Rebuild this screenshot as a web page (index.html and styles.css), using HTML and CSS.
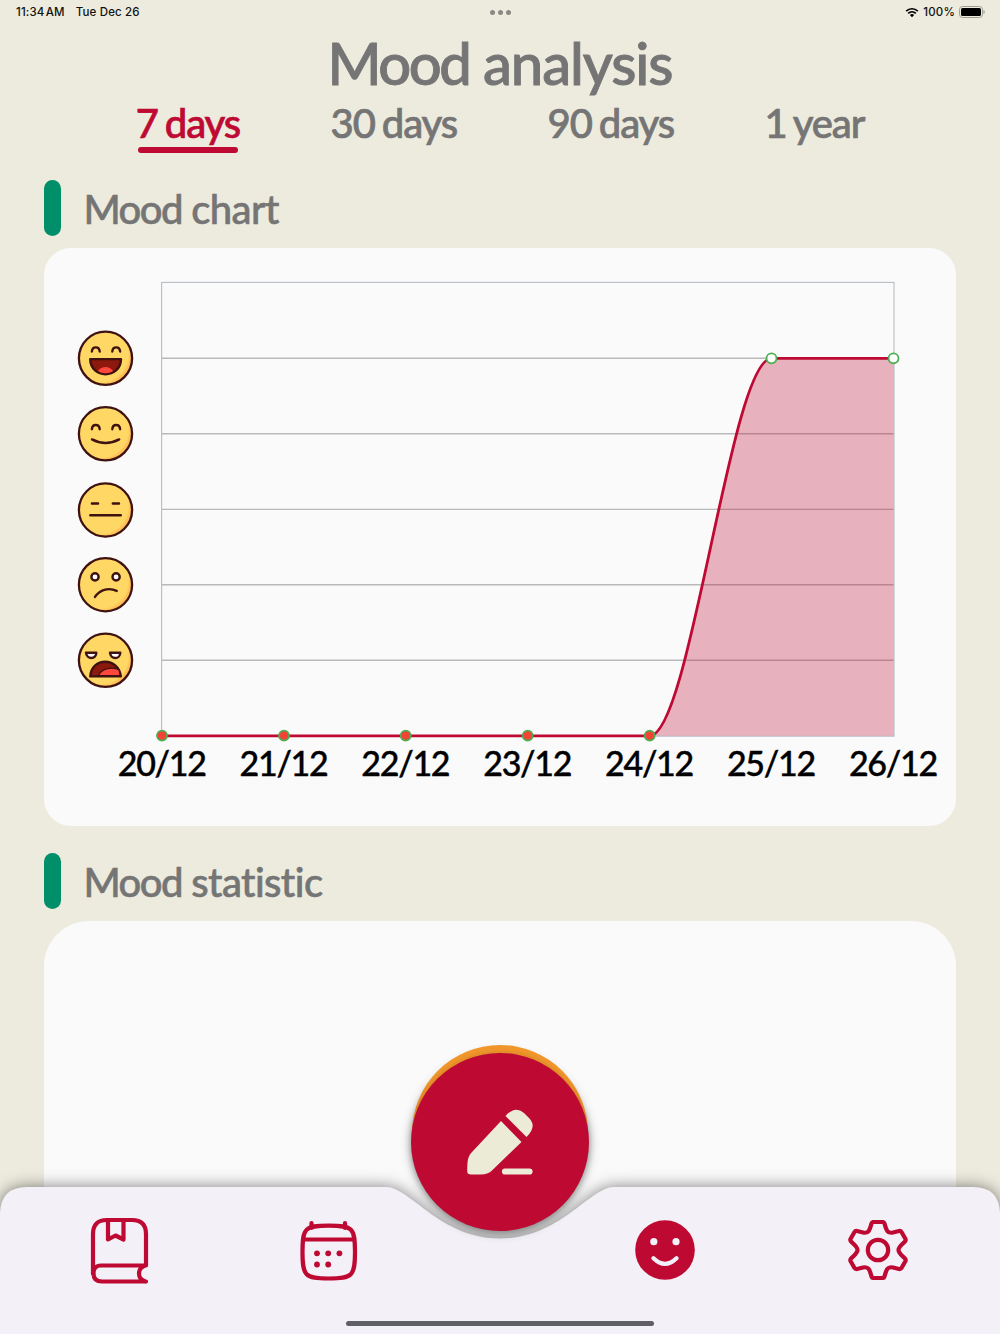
FILE: index.html
```html
<!DOCTYPE html>
<html lang="en">
<head>
<meta charset="UTF-8">
<meta name="viewport" content="width=device-width">
<title>Mood analysis</title>
<link rel="stylesheet" href="styles.css">
</head>
<body>
<div class="app">
	<div class="status">
		<div class="status-side"><span class="clock">11:34 AM</span><span>Tue Dec 26</span></div>
		<div class="dots"><i></i><i></i><i></i></div>
		<div class="status-side right">
			<svg class="wifi" viewBox="0 0 14 11" width="14" height="11">
				<path d="M1.2 4.1a8.3 8.3 0 0 1 11.6 0M3.2 6.3a5.5 5.5 0 0 1 7.6 0" fill="none" stroke="#000" stroke-width="1.7"/>
				<path d="M4.9 8a3 3 0 0 1 4.2 0L7 10.3z"/>
			</svg>
			<span>100%</span>
			<svg class="battery" viewBox="0 0 26 12" width="26" height="12">
				<rect x=".5" y=".5" width="23" height="11" rx="3" fill="none" stroke="#a09f96"/>
				<rect x="2" y="2" width="20" height="8" rx="1.6"/>
				<path d="M24.5 4v4q1.3-.6 1.3-2t-1.3-2" fill="#a09f96"/>
			</svg>
		</div>
	</div>

	<h1><span class="tight">Mood</span> analysis</h1>
	<div class="tabs">
		<a class="tab active">7 days</a>
		<a class="tab">30 days</a>
		<a class="tab">90 days</a>
		<a class="tab year">1 year</a>
	</div>

	<h2><div><span class="tight">Mood</span> chart</div></h2>
	<div class="card">
		<svg class="chart" viewBox="44 248 912 578">
			<defs>
				<radialGradient id="skin" cx=".4" cy=".42" r=".6">
					<stop offset=".88" stop-color="#ffd764"/>
					<stop offset=".96" stop-color="#ffbd55"/>
				</radialGradient>
				<g id="face">
					<circle r="26.6" fill="url(#skin)" stroke="#3f1212" stroke-width="2.3"/>
				</g>
			</defs>

			<!-- grid -->
			<g stroke="#b9b9ba" stroke-width="1.4">
				<path d="M162 358.3H894M162 433.8H894M162 509.4H894M162 584.8H894M162 660.3H894"/>
			</g>
			<rect x="161.6" y="282.4" width="732.4" height="453.8" fill="none" stroke="#b7bdc4" stroke-width="1.1"/>

			<!-- mood line -->
			<path class="area" d="M649.7 735.8C690.3 735.8 730.9 358.3 771.5 358.3H893.5V735.8z"/>
			<path class="line" d="M162 735.8H649.7C690.3 735.8 730.9 358.3 771.5 358.3H893.5"/>
			<g class="low">
				<circle cx="162" cy="735.6" r="5"/><circle cx="284" cy="735.6" r="5"/><circle cx="405.7" cy="735.6" r="5"/>
				<circle cx="527.7" cy="735.6" r="5"/><circle cx="649.7" cy="735.6" r="5"/>
			</g>
			<g class="high">
				<circle cx="771.5" cy="358.3" r="5"/><circle cx="893.5" cy="358.3" r="5"/>
			</g>

			<g class="dates">
				<text x="161.7" y="776.4">20/12</text>
				<text x="283.5" y="776.4">21/12</text>
				<text x="405.3" y="776.4">22/12</text>
				<text x="527.2" y="776.4">23/12</text>
				<text x="649" y="776.4">24/12</text>
				<text x="770.9" y="776.4">25/12</text>
				<text x="892.9" y="776.4">26/12</text>
			</g>

			<!-- faces -->
			<g class="mood" transform="translate(105.5 358.3)">
				<use href="#face"/>
				<path d="M-13.6-6.8c.4-5.5 7.4-5.5 7.8 0M6.8-6.8c.4-5.5 7.4-5.5 7.8 0"/>
				<path d="M-15.3.8H15.5C15 21-15 21-15.3.8z" fill="#8d180e"/>
				<path d="M-7.5 12.6C-4 7.4 4 7.4 7.5 12.6 3 15.6-3 15.6-7.5 12.6z" fill="#ff473e" stroke="none"/>
			</g>
			<g class="mood" transform="translate(105.5 433.8)">
				<use href="#face"/>
				<path d="M-13.6-4.6c.4-5.5 7.4-5.5 7.8 0M6.8-4.6c.4-5.5 7.4-5.5 7.8 0M-13.5 5.6Q0 12.8 13.7 5.6"/>
			</g>
			<g class="mood" transform="translate(105.5 510)">
				<use href="#face"/>
				<path d="M-13.6-6.5h6.2M7.3-6.5h6.2M-15.2 5.2H15.3"/>
			</g>
			<g class="mood" transform="translate(105.5 584.7)">
				<use href="#face"/>
				<circle cx="-10.5" cy="-7.8" r="3.6" fill="#fff"/><circle cx="10.6" cy="-7.8" r="3.6" fill="#fff"/>
				<path d="M-10.5 12.2C-5 4 4 2.8 11.2 6.2"/>
			</g>
			<g class="mood" transform="translate(105.5 660.3)">
				<use href="#face"/>
				<path d="M-19.5-7.6H-9.2C-9-.5-19-.5-19.5-7.6zM4.5-7.6H14.8C14.5-.5 5-.5 4.5-7.6z" fill="#fff"/>
				<path d="M-15.2 16.1C-14-3.5 13-3.5 15.3 16.1z" fill="#8d180e"/>
				<path d="M-7 15.2C-4 8 7 6 13.5 9.5L14.6 15.2z" fill="#ff473e" stroke-width="1.2"/>
			</g>
		</svg>
	</div>

	<h2 class="second"><div><span class="tight">Mood</span> statistic</div></h2>
	<div class="card stat"></div>

	<div class="nav">
		<svg class="nav-bg" viewBox="0 0 1000 147">
			<path d="M0 147V26Q1 0 27 0H386C410 0 440 51.500 500 51.500S590 0 614 0H973Q999 0 1000 26V147z"/>
		</svg>
		<div class="nav-items">
			<svg class="icon book" viewBox="0 0 60 68">
				<path d="M3 57V17Q3 3 17 3H42Q56 3 56 17V48.500H11Q3.500 48.500 3.500 56.500T12 64.500H56M55.500 48.500Q49 50.500 49 56.500T55.500 64.500"/>
				<path d="M18 4V22.500L25.500 18.500 33.500 22.500V4"/>
			</svg>
			<svg class="icon cal" viewBox="0 0 60 62">
				<path d="M3.500 32C3.500 8 5.500 5.700 29.700 5.700S56 8 56 32 53.500 58.500 29.700 58.500 3.500 56 3.500 32zM5 19.500H55M12.500 3V8M46 3V8"/>
				<g fill="#be0933" stroke="none">
					<circle cx="18" cy="33.300" r="2.900"/><circle cx="29.200" cy="33.300" r="2.900"/><circle cx="40.400" cy="33.300" r="2.900"/>
					<circle cx="18" cy="44.500" r="2.900"/><circle cx="29.200" cy="44.500" r="2.900"/>
				</g>
			</svg>
			<svg class="icon smile" viewBox="0 0 60 60">
				<circle cx="30" cy="30" r="29.800" fill="#be0933" stroke="none"/>
				<g fill="#f3f0f7" stroke="none"><circle cx="18.800" cy="21.700" r="3.600"/><circle cx="41" cy="21.700" r="3.600"/></g>
				<path d="M18.500 38.300Q30 49.500 41.500 38.300" stroke="#f3f0f7"/>
			</svg>
			<svg class="icon gear" viewBox="0 0 60 60">
				<path d="M25.500 2H34.500Q36 2 36.500 3.500C38 9 39 14 45 12.500L51 11Q52.800 10.800 53.500 12L57.500 19Q58 20.500 57 21.500C53 25.500 50.500 27 50.500 30S53 34.500 57 38.500Q58 39.500 57.500 41L53.500 48Q52.800 49.200 51 49L45 47.500C39 46 38 51 36.500 56.500Q36 58 34.500 58H25.500Q24 58 23.500 56.500C22 51 21 46 15 47.500L9 49Q7.200 49.200 6.500 48L2.500 41Q2 39.500 3 38.500C7 34.500 9.500 33 9.500 30S7 25.500 3 21.500Q2 20.500 2.500 19L6.500 12Q7.200 10.800 9 11L15 12.500C21 14 22 9 23.500 3.500Q24 2 25.500 2z"/>
				<circle cx="30" cy="30" r="10.200"/>
			</svg>
		</div>
		<div class="home"></div>
	</div>

	<div class="fab">
		<svg viewBox="0 0 68 68">
			<path d="M34 12L54.500 33 26 60.500Q21.500 65.500 14 65.500H4Q0 65.500 .2 62C.5 53 0 48 5.500 42.500z"/>
			<path d="M38.500 7Q48-4 57 4L61 8Q71 17 59.500 28z"/>
			<path d="M38 62.500H62.500" stroke="#ecebd6" stroke-width="6.200" stroke-linecap="round"/>
		</svg>
	</div>
</div>
</body>
</html>
```
FILE: styles.css
```css
* {
	box-sizing: border-box;
}
body {
	margin: 0;
	background-color: #edebde;
	font-family: Lato, sans-serif;
	color: #757575;
}
.app {
	position: relative;
	width: 1000px;
	height: 1334px;
	overflow: hidden;
	display: flex;
	flex-direction: column;
}
.app > * {
	flex: none;
}

/* status bar */
.status {
	display: flex;
	align-items: center;
	height: 24px;
	padding: 0 15px 0 16px;
	font: 500 11.5px Inter, sans-serif;
	letter-spacing: 0.15px;
	color: #111;
}
.status-side {
	flex: 1;
	display: flex;
	align-items: center;
	gap: 11px;
}
.right {
	justify-content: flex-end;
	gap: 4px;
}
.clock {
	word-spacing: -2px;
}
.dots {
	display: flex;
	gap: 3px;
}
.dots i {
	width: 5px;
	height: 5px;
	border-radius: 50%;
	background: #8b8a82;
}

h1, h2 {
	margin: 0;
	font-weight: 500;
}
h1 {
	height: 76px;
	font-size: 58px;
	line-height: 78px;
	letter-spacing: -1.1px;
	text-align: center;
	-webkit-text-stroke: 0.9px #757575;
}
h1 .tight {
	letter-spacing: -2.5px;
}
.tabs {
	display: flex;
	justify-content: center;
	gap: 90.5px;
	height: 80px;
	font-size: 40px;
	font-weight: 500;
	line-height: 47px;
	letter-spacing: -1.1px;
	word-spacing: -2px;
}
.tab {
	-webkit-text-stroke: 0.7px currentColor;
}
.active {
	display: flex;
	flex-direction: column;
	align-items: center;
	color: #be0933;
}
.active::after {
	content: "";
	width: 100px;
	height: 6px;
	border-radius: 3px;
	background: #be0933;
}
h2 {
	display: flex;
	align-items: center;
	gap: 22.5px;
	height: 56px;
	margin-left: 44px;
	font-size: 40px;
	line-height: 50px;
	letter-spacing: -0.6px;
	-webkit-text-stroke: 0.6px #757575;
}
h2 div {
	padding-top: 2px;
}
h2::before {
	content: "";
	width: 17px;
	height: 56px;
	border-radius: 9px;
	background: #008f68;
}
h2 .tight {
	letter-spacing: -1.6px;
}
.second {
	margin-top: 27px;
}
.card {
	width: 912px;
	height: 578px;
	margin: 12px 0 0 44px;
	border-radius: 27px;
	background: #fafafa;
}
.stat {
	height: 460px;
	border-radius: 45px;
}

/* chart */
.chart {
	display: block;
	width: 912px;
	height: 578px;
}
.area {
	fill: #be0933;
	fill-opacity: 0.3;
}
.line {
	fill: none;
	stroke: #be0933;
	stroke-width: 2.8;
}
.low circle {
	fill: #f44336;
	stroke: #4caf50;
	stroke-width: 1.8;
}
.high circle {
	fill: #fff;
	stroke: #4caf50;
	stroke-width: 1.8;
}
.dates {
	font-size: 34px;
	font-weight: 500;
	letter-spacing: -1.3px;
	fill: #000;
	stroke: #000;
	stroke-width: 0.4px;
	text-anchor: middle;
}
.mood {
	fill: none;
	stroke: #3f1212;
	stroke-width: 2.4;
	stroke-linecap: round;
	stroke-linejoin: round;
}

/* bottom navigation */
.nav {
	position: absolute;
	left: 0;
	bottom: 0;
	width: 1000px;
	height: 147px;
}
.nav-bg {
	position: absolute;
	inset: 0;
	overflow: visible;
	fill: #f3f0f7;
	filter: drop-shadow(0 0 8px rgba(0, 0, 0, 0.5));
}
.nav-items {
	position: relative;
	display: flex;
	height: 134px;
	padding: 30px 91px 0 90px;
}
.icon {
	fill: none;
	stroke: #be0933;
	stroke-width: 4.2;
	stroke-linecap: round;
	stroke-linejoin: round;
}
.book {
	width: 60px;
	height: 68px;
}
.cal {
	width: 60px;
	height: 62px;
	margin: 3px 0 0 149px;
}
.smile {
	width: 60px;
	height: 60px;
	margin: 3px 0 0 276px;
}
.gear {
	width: 60px;
	height: 60px;
	margin: 3px 0 0 153px;
}
.home {
	position: relative;
	width: 308px;
	height: 5px;
	margin: 0 auto;
	border-radius: 3px;
	background: #605f63;
}
.fab {
	position: absolute;
	left: 411px;
	top: 1053px;
	width: 178px;
	height: 178px;
	display: flex;
	align-items: center;
	justify-content: center;
	padding: 2px 0 0 2px;
	border-radius: 50%;
	background: #be0933;
	box-shadow: 0 2px 6px rgba(0, 0, 0, 0.3), 0 -9px 0 -1px #f0962b, 0 1px 12px rgba(0, 0, 0, 0.3);
}
.fab svg {
	width: 68px;
	height: 68px;
	fill: #ecebd6;
}
```
